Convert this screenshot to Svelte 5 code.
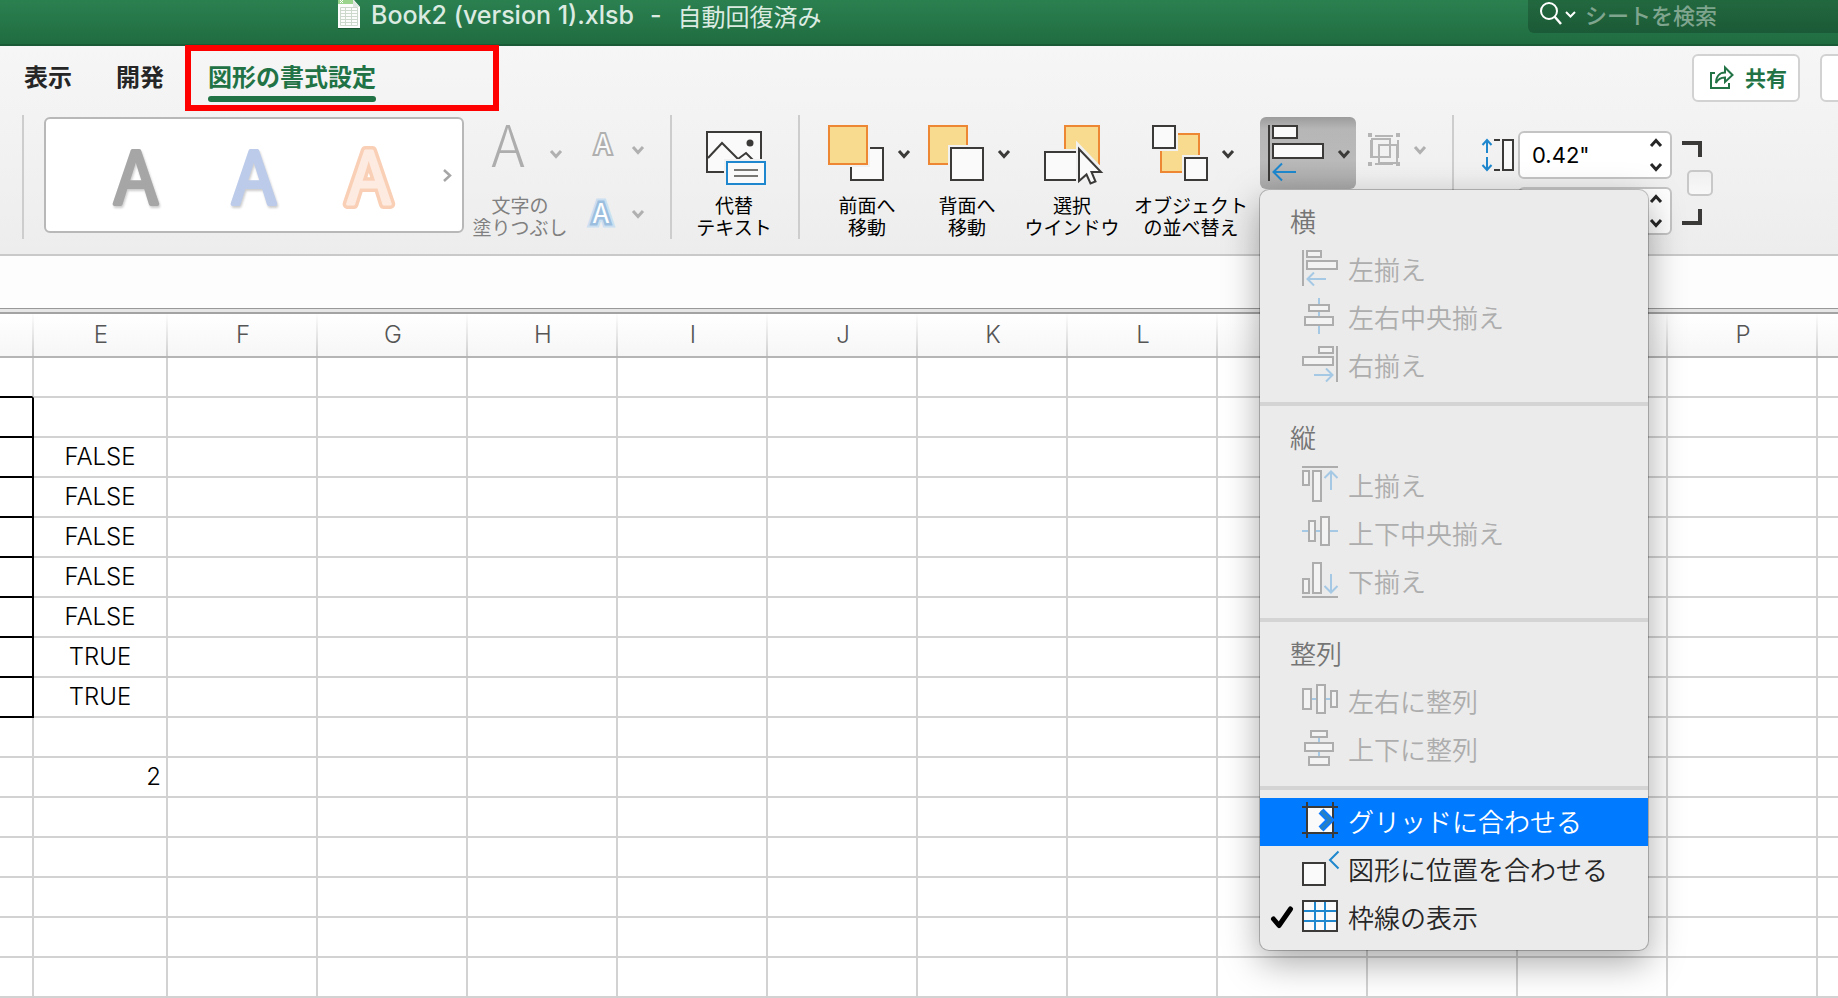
<script>
  const columns = ['E', 'F', 'G', 'H', 'I', 'J', 'K', 'L', 'M', 'N', 'O', 'P', 'Q'];
  const values = ['', '', 'FALSE', 'FALSE', 'FALSE', 'FALSE', 'FALSE', 'TRUE', 'TRUE', '', '2', '', '', '', '', ''];
  const tabs = ['表示', '開発', '図形の書式設定'];
  let active = $state('図形の書式設定');
  let height = $state('0.42"');
  let width = $state('');
  let locked = $state(false);

  const sections = [
    {
      title: '横',
      items: [
        { label: '左揃え', icon: 'left' },
        { label: '左右中央揃え', icon: 'center' },
        { label: '右揃え', icon: 'right' }
      ]
    },
    {
      title: '縦',
      items: [
        { label: '上揃え', icon: 'top' },
        { label: '上下中央揃え', icon: 'middle' },
        { label: '下揃え', icon: 'bottom' }
      ]
    },
    {
      title: '整列',
      items: [
        { label: '左右に整列', icon: 'spreadH' },
        { label: '上下に整列', icon: 'spreadV' }
      ]
    }
  ];

  // Boxes are [x, y, w, h] on stroke centres; "guide" and "arrow" are path data.
  const shapes = {
    left: { boxes: [[5, 1, 14, 6], [5, 11, 30, 8]], guide: 'M1 0V36', arrow: 'M24 29H6M12 22.500L5.500 29L12 35.500' },
    center: { boxes: [[7, 7, 20, 6], [3, 19, 28, 8]], guide: '', arrow: 'M17 0V6M17 14V18M17 28V36' },
    right: { boxes: [[17, 1, 14, 6], [1, 11, 30, 8]], guide: 'M35 0V36', arrow: 'M12 29H30M24 22.500L30.500 29L24 35.500' },
    top: { boxes: [[1, 5, 6, 14], [11, 5, 8, 30]], guide: 'M0 1H36', arrow: 'M29 24V6M22.500 12L29 5.500L35.500 12' },
    middle: { boxes: [[7, 7, 6, 20], [19, 3, 8, 28]], guide: '', arrow: 'M0 17H6M14 17H18M28 17H36' },
    bottom: { boxes: [[1, 17, 6, 14], [11, 1, 8, 30]], guide: 'M0 35H36', arrow: 'M29 12V30M22.500 24L29 30.500L35.500 24' },
    spreadH: { boxes: [[1, 7, 8, 20], [15, 3, 8, 28], [29, 9, 6, 16]], guide: '', arrow: 'M10 17H14M24 17H28' },
    spreadV: { boxes: [[9, 1, 16, 6], [3, 13, 28, 8], [7, 27, 20, 8]], guide: '', arrow: 'M17 8V12M17 22V26' }
  };
</script>

<div class="app">
  <header class="titlebar">
    <div class="title">
      <svg width="24" height="30" viewBox="0 0 24 30" aria-hidden="true">
        <path d="M1 0H17L23 7V28H1Z" fill="#fbfcfb" />
        <path d="M1 0H16V4H1Z" fill="#9bd48c" />
        <path d="M3 0L6 3M6 0L3 3" stroke="#fff" />
        <path d="M16 0V7H23Z" fill="#dfe5e1" />
        <path d="M3.500 7.500H20.500V25.500H3.500ZM8.500 7.500V25.500M14.500 7.500V25.500M3.500 10.500H20.500M3.500 13.500H20.500M3.500 16.500H20.500M3.500 19.500H20.500M3.500 22.500H20.500" fill="none" stroke="#cdd8cd" />
        <path d="M1 28.500H23" stroke="#185432" />
      </svg>
      <span class="file">Book2 (version 1).xlsb</span><span class="dash">-</span><span>自動回復済み</span>
    </div>
    <label class="search">
      <svg width="30" height="30" viewBox="0 0 30 30" fill="none" stroke="#fff" stroke-width="2" aria-hidden="true">
        <circle cx="10" cy="11" r="8" />
        <path d="M15.500 16.500L22 24" stroke-width="2.500" />
        <path d="M27 12L31.500 16.500L36 12" />
      </svg>
      <input type="search" placeholder="シートを検索" aria-label="シートを検索" />
    </label>
  </header>

  <div class="ribbon">
    <div class="tabrow">
      <nav class="tabs">
        {#each tabs as tab}
          <button class="tab" class:active={tab === active} onclick={() => (active = tab)}>{tab}</button>
        {/each}
        <span class="callout"></span>
      </nav>
      <div class="actions">
        <button class="share">
          <svg width="24" height="26" viewBox="0 0 24 26" fill="none" stroke="#217346" stroke-width="2" aria-hidden="true">
            <path d="M5 9H1V24H19V19" />
            <path d="M6 19C6 12 10 8.500 15 8.500V3.500L22.500 11L15 18V13.500C11 13.500 8 15 6 19Z" stroke-linejoin="miter" />
          </svg>
          共有
        </button>
        <button class="share more" aria-label="その他"></button>
      </div>
    </div>

    <div class="tools">
      <span class="sep lead"></span>

      <div class="gallery">
        <svg width="416" height="112" viewBox="0 0 416 112" aria-hidden="true">
          <g class="wordart">
            <g class="drop">
              <text x="90" y="85" fill="#a6a6a6" stroke="#a6a6a6" stroke-width="4">A</text>
              <text x="208" y="85" fill="#bccbea" stroke="#bccbea" stroke-width="4">A</text>
            </g>
            <text x="323" y="85" fill="#f9cfb5" stroke="#f9cfb5" stroke-width="10">A</text>
            <text x="323" y="85" fill="#fdebe1" stroke="#fdebe1" stroke-width="3">A</text>
          </g>
          <path d="M398 51L404 56.500L398 62" fill="none" stroke="#a6a6a6" stroke-width="2.500" />
        </svg>
      </div>

      <button class="tool muted fill">
        <svg width="96" height="56" viewBox="0 0 96 56" aria-hidden="true">
          <text class="thin" x="36" y="42">A</text>
          <path class="chev" d="M79 26L84 31.500L89 26" />
        </svg>
        <span>文字の<br />塗りつぶし</span>
      </button>

      <div class="effects">
        <button class="mini" aria-label="文字の輪郭">
          <svg width="58" height="34" viewBox="0 0 58 34" aria-hidden="true">
            <text class="small" x="17" y="27" fill="#b0b0b0" stroke="#b0b0b0" stroke-width="4">A</text>
            <text class="small" x="17" y="27" fill="#fafafa" stroke="none">A</text>
            <path class="chev" d="M47 20L52 25.500L57 20" />
          </svg>
        </button>
        <button class="mini" aria-label="文字の効果">
          <svg width="58" height="34" viewBox="0 0 58 34" aria-hidden="true">
            <text class="small" x="15" y="28" fill="#cbdff1" stroke="#cbdff1" stroke-width="9">A</text>
            <text class="small" x="15" y="28" fill="#9cbfe0" stroke="#9cbfe0" stroke-width="5">A</text>
            <text class="small" x="15" y="28" fill="#fff" stroke="none">A</text>
            <path class="chev" d="M47 16L52 21.500L57 16" />
          </svg>
        </button>
      </div>

      <span class="sep"></span>

      <button class="tool">
        <svg width="76" height="56" viewBox="0 0 76 56" fill="none" stroke="#3b3a39" stroke-width="2" aria-hidden="true">
          <path d="M11 7H65V47H11Z" fill="#fafafa" />
          <path d="M12 33L26 18L42 34M42 34L50 28L59 37" />
          <circle cx="54" cy="18" r="3.500" fill="#3b3a39" stroke="none" />
          <path d="M28 34H72V62H28Z" fill="#f1f1f1" stroke="none" />
          <path d="M31 37H69V59H31Z" fill="#fafafa" stroke="#1e87cd" />
          <path d="M38 45H62M38 51H62" stroke="#797774" />
        </svg>
        <span>代替<br />テキスト</span>
      </button>

      <span class="sep"></span>

      <div class="group">
        <button class="tool">
          <svg width="86" height="56" viewBox="0 0 86 56" fill="none" stroke="#3b3a39" stroke-width="2" aria-hidden="true">
            <path d="M27 23H59V55H27Z" fill="#fafafa" />
            <path d="M3 0H46V42H3Z" fill="#f1f1f1" stroke="none" />
            <path d="M5 1H43V39H5Z" fill="#f8db8f" stroke="#ed8733" />
            <path class="chev dark" d="M75 26L80 31.500L85 26" />
          </svg>
          <span>前面へ<br />移動</span>
        </button>
        <button class="tool">
          <svg width="86" height="56" viewBox="0 0 86 56" fill="none" stroke="#3b3a39" stroke-width="2" aria-hidden="true">
            <path d="M5 1H43V39H5Z" fill="#f8db8f" stroke="#ed8733" />
            <path d="M24 20H62V56H24Z" fill="#f1f1f1" stroke="none" />
            <path d="M27 23H59V55H27Z" fill="#fafafa" />
            <path class="chev dark" d="M75 26L80 31.500L85 26" />
          </svg>
          <span>背面へ<br />移動</span>
        </button>
        <button class="tool">
          <svg width="96" height="60" viewBox="0 0 96 60" fill="none" stroke="#3b3a39" stroke-width="2" aria-hidden="true">
            <path d="M41 1H75V39H41Z" fill="#f8db8f" stroke="#ed8733" />
            <path d="M18 24H54V58H18Z" fill="#f1f1f1" stroke="none" />
            <path d="M53 55H21V27H53" fill="#fafafa" />
            <path d="M53 18L80 46H71L75 57L66 61L60 52L53 59Z" fill="#f1f1f1" stroke="#f1f1f1" />
            <path d="M55 24L77 47H67.500L71.500 56.500L66.500 58.500L62.500 49.500L55 56Z" fill="#fafafa" />
          </svg>
          <span>選択<br />ウインドウ</span>
        </button>
        <button class="tool">
          <svg width="114" height="56" viewBox="0 0 114 56" fill="none" stroke="#3b3a39" stroke-width="2" aria-hidden="true">
            <path d="M27 9H65V47H27Z" fill="#f8db8f" stroke="#ed8733" />
            <path d="M16 0H44V26H16ZM48 30H80V56H48Z" fill="#f1f1f1" stroke="none" />
            <path d="M19 1H41V23H19ZM51 33H73V55H51Z" fill="#fafafa" />
            <path class="chev dark" d="M89 26L94 31.500L99 26" />
          </svg>
          <span>オブジェクト<br />の並べ替え</span>
        </button>
      </div>

      <div class="align">
        <button class="alignbtn" aria-label="配置" aria-haspopup="menu" aria-expanded="true">
          <svg width="96" height="72" viewBox="0 0 96 72" fill="none" stroke="#3b3a39" stroke-width="2" aria-hidden="true">
            <path d="M9 8V64" />
            <path d="M13 9H37V21H13ZM13 27H63V41H13Z" fill="#fafafa" />
            <path d="M36 55H14M22 46.500L13.500 55L22 63.500" stroke="#1e87cd" />
            <path class="chev dark" d="M79 34L84 39.500L89 34" />
          </svg>
        </button>

        <div class="menu" role="menu">
          {#each sections as section}
            <div class="section">
              <div class="heading">{section.title}</div>
              {#each section.items as item}
                <button class="item" role="menuitem" disabled>
                  <span class="check"></span>
                  <svg width="36" height="36" viewBox="0 0 36 36" fill="none" stroke="#adadad" stroke-width="2" aria-hidden="true">
                    {#each shapes[item.icon].boxes as [x, y, w, h]}
                      <rect {x} {y} width={w} height={h} fill="#f3f3f3" />
                    {/each}
                    <path d={shapes[item.icon].guide} />
                    <path d={shapes[item.icon].arrow} stroke="#a5c9e4" />
                  </svg>
                  {item.label}
                </button>
              {/each}
            </div>
          {/each}
          <div class="section">
            <button class="item selected" role="menuitem">
              <span class="check"></span>
              <svg width="36" height="36" viewBox="0 0 36 36" fill="none" stroke="#3b3a39" stroke-width="2" aria-hidden="true">
                <path d="M5 5H31V31H5Z" fill="#fafafa" stroke="none" />
                <path d="M5 0V36M31 0V36M0 5H36M0 31H36" />
                <path d="M19 9L28 18L19 27" stroke="#0a7aff" stroke-width="7" />
                <path d="M19 9L28 18L19 27" stroke="#2a80bd" stroke-width="3" />
              </svg>
              グリッドに合わせる
            </button>
            <button class="item" role="menuitem">
              <span class="check"></span>
              <svg width="36" height="36" viewBox="0 0 36 36" fill="none" stroke="#3b3a39" stroke-width="2" aria-hidden="true">
                <path d="M1 13H23V35H1Z" fill="#fafafa" />
                <path d="M36.500 1.500L28 10L36.500 18.500" stroke="#1e87cd" />
              </svg>
              図形に位置を合わせる
            </button>
            <button class="item" role="menuitemcheckbox" aria-checked="true">
              <span class="check">
                <svg width="24" height="24" viewBox="0 0 24 24" fill="none" stroke="#000" stroke-width="5" stroke-linecap="round" stroke-linejoin="round" aria-hidden="true">
                  <path d="M3.500 14L9 20.500L20.500 4" />
                </svg>
              </span>
              <svg width="36" height="36" viewBox="0 0 36 36" fill="none" stroke="#3b3a39" stroke-width="2" aria-hidden="true">
                <path d="M1 3H35V33H1Z" fill="#fafafa" />
                <path d="M13 4V32M23 4V32M2 13H34M2 23H34" stroke="#1e87cd" />
              </svg>
              枠線の表示
            </button>
          </div>
        </div>
      </div>

      <button class="mini grouping" aria-label="グループ化">
        <svg width="58" height="34" viewBox="0 0 58 34" fill="none" stroke="#b5b5b5" stroke-width="2" aria-hidden="true">
          <path d="M7 3H25M7 31H25M3 7V25M30 7V25" />
          <path d="M4 6H22V24H4ZM11 12H29V30H11Z" fill="none" />
          <path d="M0 0H4V4H0ZM28 0H32V4H28ZM0 29H4V33H0ZM28 29H32V33H28Z" fill="#b5b5b5" stroke="none" />
          <path class="chev" d="M47 14L52 19.500L57 14" />
        </svg>
      </button>

      <span class="sep"></span>

      <div class="sizes">
        <label class="size">
          <svg width="32" height="34" viewBox="0 0 32 34" fill="none" stroke="#3b3a39" stroke-width="2" aria-hidden="true">
            <path d="M5 15V3M0.500 7L5 2L9.500 7M5 19V31M0.500 27L5 32L9.500 27" stroke="#1e87cd" />
            <path d="M12 2H18M12 32H18" />
            <path d="M21 2H31V32H21Z" fill="#fafafa" />
          </svg>
          <span class="spin">
            <input bind:value={height} aria-label="高さ" />
            <svg width="14" height="34" viewBox="0 0 14 34" fill="none" stroke="#262626" stroke-width="3" aria-hidden="true">
              <path d="M2 8L7 2.500L12 8M2 26L7 31.500L12 26" />
            </svg>
          </span>
        </label>
        <label class="size">
          <svg width="32" height="34" viewBox="0 0 32 34" aria-hidden="true"></svg>
          <span class="spin">
            <input bind:value={width} aria-label="幅" />
            <svg width="14" height="34" viewBox="0 0 14 34" fill="none" stroke="#262626" stroke-width="3" aria-hidden="true">
              <path d="M2 8L7 2.500L12 8M2 26L7 31.500L12 26" />
            </svg>
          </span>
        </label>
      </div>

      <div class="lock">
        <svg width="20" height="16" viewBox="0 0 20 16" fill="none" stroke="#3b3a39" stroke-width="4" aria-hidden="true">
          <path d="M0 2H18V16" />
        </svg>
        <input type="checkbox" bind:checked={locked} aria-label="縦横比を固定" />
        <svg width="20" height="16" viewBox="0 0 20 16" fill="none" stroke="#3b3a39" stroke-width="4" aria-hidden="true">
          <path d="M0 14H18V0" />
        </svg>
      </div>
    </div>
  </div>

  <input class="formula" aria-label="数式バー" />
  <div class="divider"></div>

  <table>
    <colgroup>
      <col class="narrow" />
      <col class="medium" />
      {#each columns.slice(1) as _}
        <col class="wide" />
      {/each}
    </colgroup>
    <thead>
      <tr>
        <th></th>
        {#each columns as name}
          <th scope="col">{name}</th>
        {/each}
      </tr>
    </thead>
    <tbody>
      {#each values as value, row}
        <tr>
          <td class:under={row < 9} class:side={row > 0 && row < 9}></td>
          <td class:number={value === '2'}>{value}</td>
          {#each columns.slice(1) as _}
            <td></td>
          {/each}
        </tr>
      {/each}
    </tbody>
  </table>
</div>

<style>
  :global(body) {
    overflow: hidden;
  }

  .app {
    min-height: 100vh;
    overflow: hidden;
    background: #fff;
    color: #000;
    font-family: 'Noto Sans CJK JP', sans-serif;
  }

  .app *,
  .app *::after {
    box-sizing: border-box;
  }

  svg {
    display: block;
    flex: none;
    overflow: visible;
  }

  button,
  input {
    margin: 0;
    padding: 0;
    border: 0;
    background: none;
    color: inherit;
    font: inherit;
  }

  input {
    outline: none;
  }

  .titlebar {
    display: flex;
    justify-content: space-between;
    align-items: flex-start;
    height: 46px;
    padding-left: 337px;
    border-bottom: 2px solid #1b5a36;
    background: linear-gradient(#2b8050, #1f6c40);
  }

  .title {
    display: flex;
    align-items: flex-start;
    color: #dcebe2;
    font-size: 24px;
    line-height: 31px;
    white-space: pre;
  }

  .title svg {
    margin-right: 10px;
  }

  .file,
  .dash {
    font-family: Inter, sans-serif;
    font-size: 25px;
    font-weight: 500;
  }

  .dash {
    margin: 0 16px;
  }

  .search {
    display: flex;
    width: 310px;
    height: 33px;
    padding-left: 11px;
    border-bottom-left-radius: 6px;
    background: linear-gradient(#22683f, #1b5a36);
  }

  .search input {
    flex: 1;
    min-width: 0;
    height: 28px;
    margin-left: 16px;
    color: #dcebe2;
    font-size: 22px;
    font-weight: 500;
  }

  .search input::placeholder {
    color: #7fa58f;
    opacity: 1;
  }

  .ribbon {
    border-bottom: 2px solid #c9c9c9;
    background: linear-gradient(#f6f6f6, #ededed);
  }

  .tabrow {
    display: flex;
    justify-content: space-between;
    height: 56px;
    padding-left: 24px;
  }

  .tabs {
    position: relative;
    display: flex;
    gap: 44px;
    padding-top: 14px;
  }

  .tab {
    color: #262626;
    font-size: 24px;
    font-weight: 700;
    line-height: 32px;
    white-space: nowrap;
  }

  .tab::after {
    content: '';
    display: block;
    height: 6px;
    margin-top: 4px;
    border-radius: 3px;
  }

  .tab.active {
    color: #217346;
  }

  .tab.active::after {
    background: #217346;
  }

  .callout {
    position: absolute;
    top: -1px;
    left: 161px;
    width: 314px;
    height: 66px;
    border: 6px solid #f00;
    pointer-events: none;
  }

  .actions {
    display: flex;
    gap: 20px;
    width: 146px;
    padding-top: 8px;
  }

  .share {
    display: flex;
    flex: none;
    align-items: center;
    gap: 11px;
    width: 108px;
    height: 48px;
    padding: 0 0 3px 16px;
    border: 2px solid #d2d2d2;
    border-radius: 6px;
    background: #fff;
    color: #217346;
    font-size: 21px;
    font-weight: 700;
  }

  .tools {
    display: flex;
    align-items: flex-start;
    margin-top: 13px;
    padding: 0 0 15px 22px;
  }

  .tools > * {
    flex: none;
  }

  .sep {
    width: 2px;
    height: 124px;
    margin: 0 24px 0 26px;
    background: #cdcdcd;
  }

  .sep.lead {
    margin: 0 20px 0 0;
  }

  .gallery {
    margin-top: 2px;
    border: 2px solid #b8b8b8;
    border-radius: 6px;
    background: #fff;
  }

  .wordart text {
    font-size: 72px;
    font-weight: 350;
    text-anchor: middle;
    stroke-linejoin: round;
  }

  .drop {
    filter: drop-shadow(1px 2px 1px #0003);
  }

  .thin {
    fill: #adadad;
    font-size: 57px;
    font-weight: 300;
    text-anchor: middle;
  }

  .small {
    font-size: 27px;
    font-weight: 400;
    text-anchor: middle;
  }

  .chev {
    fill: none;
    stroke: #b0b0b0;
    stroke-width: 3;
  }

  .chev.dark {
    stroke: #3b3a39;
  }

  .tool {
    display: flex;
    flex-direction: column;
    align-items: center;
    justify-content: space-between;
    height: 123px;
    padding-top: 10px;
    font-size: 19px;
    line-height: 22px;
    white-space: nowrap;
  }

  .muted {
    color: #808080;
  }

  .fill {
    margin-left: 8px;
  }

  .effects {
    display: flex;
    flex-direction: column;
    gap: 34px;
    margin-left: 18px;
    padding-top: 12px;
  }

  .group {
    display: flex;
    gap: 14px;
  }

  .align {
    position: relative;
    margin: 2px 12px 0;
  }

  .alignbtn {
    display: block;
    border-radius: 6px;
    background: linear-gradient(#9c9c9c, #b6b6b6 12px, #bababa 60%, #a9a9a9);
  }

  .grouping {
    margin-top: 18px;
  }

  .menu {
    position: absolute;
    z-index: 2;
    top: 73px;
    left: 0;
    width: 388px;
    padding-bottom: 8px;
    border-radius: 9px;
    background: #ebebeb;
    box-shadow: 0 0 0 1px #0000003a, 0 12px 36px #00000059;
    font-size: 26px;
    font-weight: 350;
    line-height: 46px;
  }

  .section {
    padding-top: 8px;
  }

  .section + .section {
    margin-top: 12px;
    border-top: 4px solid #d4d4d4;
  }

  .heading {
    height: 48px;
    padding-left: 30px;
    color: #757575;
  }

  .item {
    display: flex;
    align-items: center;
    width: 100%;
    height: 48px;
    padding: 0 0 2px 10px;
    color: #262626;
    text-align: left;
    white-space: nowrap;
  }

  .item > svg {
    margin: 0 10px 2px 0;
  }

  .item:disabled {
    color: #adadad;
  }

  .item.selected {
    background: #007aff;
    color: #fff;
  }

  .check {
    flex: none;
    width: 32px;
  }

  .sizes {
    display: flex;
    flex-direction: column;
    gap: 8px;
    padding: 16px 0 0 4px;
  }

  .size {
    display: flex;
    align-items: center;
    gap: 4px;
  }

  .spin {
    display: flex;
    align-items: center;
    justify-content: space-between;
    width: 154px;
    height: 48px;
    padding: 0 7px 0 12px;
    border: 2px solid #c4c4c4;
    border-radius: 6px;
    background: #fff;
  }

  .spin input {
    flex: 1;
    min-width: 0;
    font-family: Inter, sans-serif;
    font-size: 22px;
  }

  .lock {
    display: flex;
    flex-direction: column;
    gap: 13px;
    padding: 26px 0 0 10px;
  }

  .lock input {
    width: 26px;
    height: 26px;
    margin-left: 5px;
    appearance: none;
    border: 2px solid #c8c8c8;
    border-radius: 5px;
    background: linear-gradient(#f0f0f0, #f8f8f8);
  }

  .formula {
    display: block;
    width: 100%;
    height: 52px;
    background: #fdfdfd;
  }

  .divider {
    height: 6px;
    border-top: 1px solid #999;
    border-bottom: 2px solid #a3a3a3;
    background: #e6e6e6;
  }

  table {
    width: 1968px;
    border-spacing: 0;
    table-layout: fixed;
    font-family: Inter, sans-serif;
    font-size: 24px;
    line-height: 30px;
  }

  .narrow {
    width: 34px;
  }

  .medium {
    width: 134px;
  }

  .wide {
    width: 150px;
  }

  th {
    height: 44px;
    padding: 0;
    border-bottom: 2px solid #b5b5b5;
    background:
      linear-gradient(#fdfdfd, #cfcfcf) right / 2px 100% no-repeat,
      linear-gradient(#fff, #f6f6f6);
    color: #555;
    font-weight: 300;
  }

  td {
    height: 40px;
    padding: 0;
    border: 0 solid #d2d2d2;
    border-width: 0 2px 2px 0;
    font-weight: 300;
    text-align: center;
  }

  td.under {
    border-bottom-color: #000;
  }

  td.side {
    border-right-color: #000;
  }

  td.number {
    padding-right: 5px;
    text-align: right;
  }
</style>
